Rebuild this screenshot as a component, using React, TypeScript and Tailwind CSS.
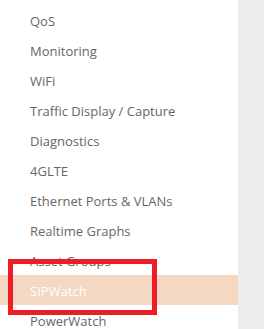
import React from "react";

const items = [
  "QoS",
  "Monitoring",
  "WiFi",
  "Traffic Display / Capture",
  "Diagnostics",
  "4GLTE",
  "Ethernet Ports & VLANs",
  "Realtime Graphs",
  "Asset Groups",
  "SIPWatch",
  "PowerWatch",
];

export default function App() {
  return (
    <div className="flex h-[329px] w-[264px] overflow-hidden bg-[#ededed]" style={{ fontFamily: '"Open Sans", "Noto Sans", sans-serif' }}>
      <div className="relative w-[238px] shrink-0 bg-white pt-[5px]">
        {items.map((it) => (
          <div
            key={it}
            className={
              "flex h-[30px] items-center pl-[30px] pt-[4px] text-[13px] " +
              (it === "SIPWatch" ? "bg-[#f4d8c2] text-white" : "text-[#666666]")
            }
          >
            {it}
          </div>
        ))}
        <div className="absolute left-[8px] top-[259px] h-[56px] w-[149px] border-[5px] border-[#ee1c25]" />
      </div>
    </div>
  );
}
